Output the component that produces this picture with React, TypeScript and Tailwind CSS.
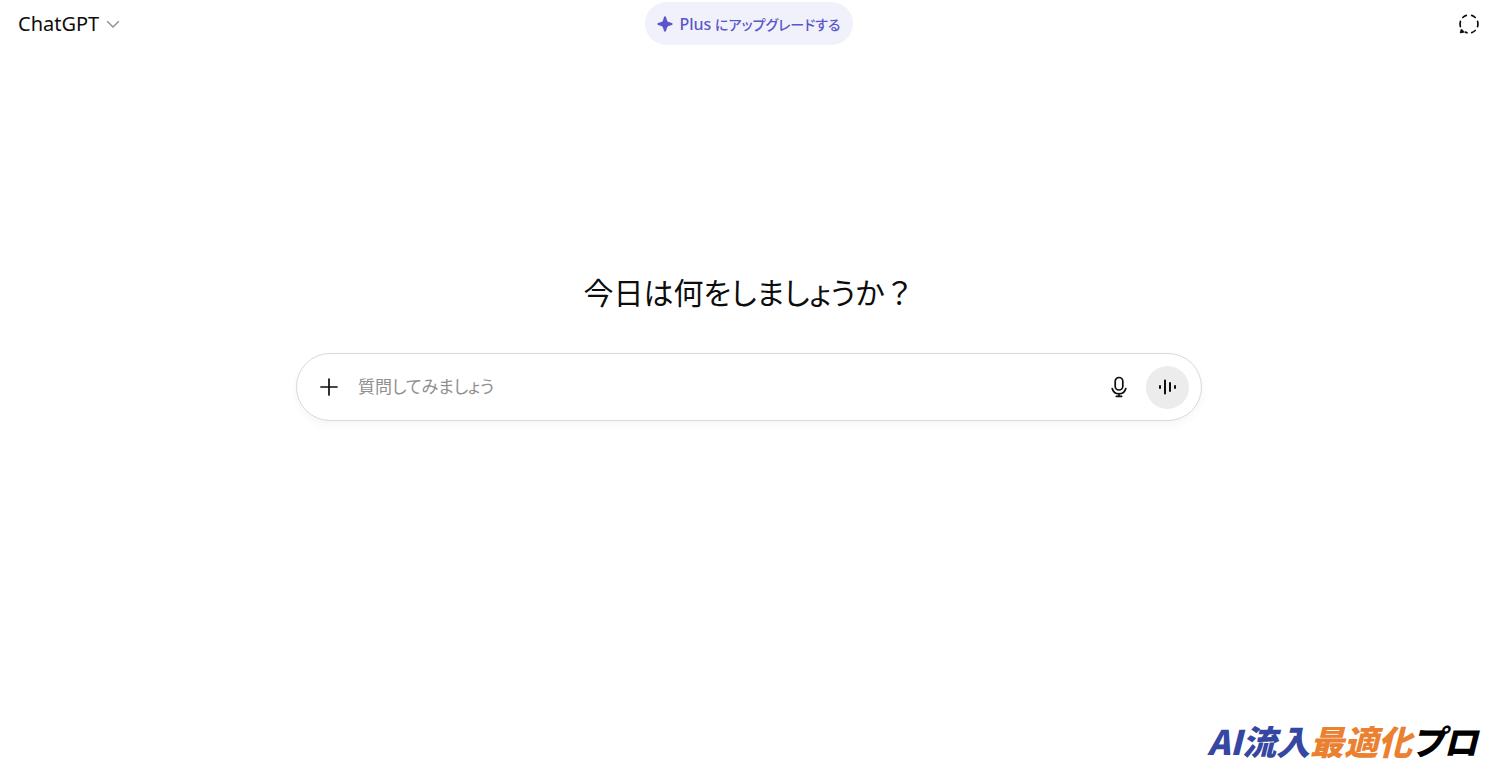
import type { ReactNode } from "react";

function ChevronIcon() {
  return (
    <svg viewBox="0 0 14 14" className="size-3.5" fill="none" stroke="#8f8f8f" strokeWidth="1.4" aria-hidden="true">
      <path d="M1.2 4.2 7 10l5.8-5.8" />
    </svg>
  );
}

function SparkleIcon() {
  return (
    <svg viewBox="0 0 16 16" className="size-4" fill="currentColor" aria-hidden="true">
      <path d="M8 .3c.5 0 .8.3 1 .8l1 3.200c.3 1 .8 1.500 1.700 1.800l3.200 1c.5.2.8.5.8.9s-.3.7-.8.9l-3.200 1c-.9.3-1.400.8-1.700 1.800l-1 3.200c-.2.5-.5.8-1 .8s-.8-.3-1-.8l-1-3.200c-.3-1-.8-1.500-1.700-1.800l-3.200-1C.6 8.700.3 8.400.3 8s.3-.7.8-.9l3.200-1C5.200 5.800 5.700 5.300 6 4.300l1-3.200c.2-.5.5-.8 1-.8Z" />
    </svg>
  );
}

function TemporaryChatIcon() {
  return (
    <svg
      viewBox="0 0 22 22"
      className="size-[22px]"
      fill="none"
      stroke="currentColor"
      strokeWidth="1.7"
      strokeLinecap="round"
      aria-hidden="true"
    >
      <path d="M4.800 4.500A9 9 0 0 1 8.300 2.400" />
      <path d="M13.700 2.400A9 9 0 0 1 17.200 4.500" />
      <path d="M19.600 8.400a9 9 0 0 1 0 5.200" />
      <path d="M17.200 17.500a9 9 0 0 1-3.500 2.100" />
      <path d="M9 19.800a9 9 0 0 1-1.800-.7" />
      <path d="M2.400 8.400a9 9 0 0 0 0 5.200" />
      <path d="M3.500 16.800 2.700 19.400 5.300 18.900Z" fill="currentColor" strokeLinejoin="round" />
    </svg>
  );
}

function PlusIcon() {
  return (
    <svg viewBox="0 0 18 18" className="size-[18px]" fill="none" stroke="currentColor" strokeWidth="1.7" strokeLinecap="round" aria-hidden="true">
      <path d="M9 1v16M1 9h16" />
    </svg>
  );
}

function MicIcon() {
  return (
    <svg viewBox="0 0 22 22" className="size-[22px]" fill="none" stroke="currentColor" strokeWidth="1.7" strokeLinecap="round" aria-hidden="true">
      <rect x="7.200" y="1.500" width="7.600" height="12.500" rx="3.800" />
      <path d="M4.200 12.500a7 7 0 0 0 13.600 0M11 17.500v2.800M8.300 20.300h5.400" />
    </svg>
  );
}

function VoiceIcon() {
  return (
    <svg viewBox="0 0 20 20" className="size-5" fill="none" stroke="currentColor" strokeWidth="2" strokeLinecap="round" aria-hidden="true">
      <path d="M2 9v2M7 3.500v13M12 6v8M17 9v2" />
    </svg>
  );
}

function IconButton({ label, className, children }: { label: string; className?: string; children: ReactNode }) {
  return (
    <button type="button" aria-label={label} className={"flex shrink-0 items-center justify-center rounded-full " + (className ?? "")}>
      {children}
    </button>
  );
}

function Header() {
  return (
    <header className="grid grid-cols-[1fr_auto_1fr] items-center px-[18px] pt-0.5">
      <button
        type="button"
        className="flex items-center gap-[7px] justify-self-start font-['Noto_Sans',sans-serif] text-[20px] leading-7"
      >
        ChatGPT
        <ChevronIcon />
      </button>
      <button
        type="button"
        className="flex h-[43px] items-center gap-1.5 rounded-full bg-[#f1f1fb] px-3 text-[14px] font-medium text-[#5a57cc]"
      >
        <SparkleIcon />
        <span>
          <span className="text-[16px]">Plus</span> にアップグレードする
        </span>
      </button>
      <IconButton label="一時チャット" className="justify-self-end">
        <TemporaryChatIcon />
      </IconButton>
    </header>
  );
}

function Composer() {
  return (
    <form
      onSubmit={(e) => e.preventDefault()}
      className="flex h-[68px] w-full max-w-[906px] items-center rounded-full border border-[#d9d9d9] bg-white pr-3 pl-[23px] shadow-[0_4px_8px_rgba(0,0,0,0.04)]"
    >
      <IconButton label="ファイルを追加">
        <PlusIcon />
      </IconButton>
      <input
        type="text"
        aria-label="質問"
        placeholder="質問してみましょう"
        className="ml-5 min-w-0 flex-1 bg-transparent text-[17px] outline-none placeholder:text-[#8f8f8f]"
      />
      <IconButton label="音声入力">
        <MicIcon />
      </IconButton>
      <IconButton label="音声モード" className="ml-4 size-[43px] bg-[#ececec]">
        <VoiceIcon />
      </IconButton>
    </form>
  );
}

function BrandMark() {
  return (
    <p className="font-['Noto_Sans_CJK_JP',sans-serif] text-[34px] leading-[42px] font-black italic">
      <span className="text-[#3547a0]">AI流入</span>
      <span className="text-[#ea8030]">最適化</span>
      <span className="text-black">プロ</span>
    </p>
  );
}

export default function App() {
  return (
    <div className="flex min-h-screen flex-col bg-white pr-0.5 font-['Noto_Sans','Noto_Sans_CJK_JP',sans-serif] text-[#0d0d0d] [font-feature-settings:'palt']">
      <Header />
      <main className="flex flex-1 flex-col items-center px-6 pt-[224px]">
        <h1 className="text-[30px] leading-[48px] font-normal">
          今日は何をしましょうか<span className="[font-feature-settings:normal]">？</span>
        </h1>
        <div className="mt-9 flex w-full justify-center">
          <Composer />
        </div>
      </main>
      <footer className="flex justify-end pr-5 pb-[18px]">
        <BrandMark />
      </footer>
    </div>
  );
}
